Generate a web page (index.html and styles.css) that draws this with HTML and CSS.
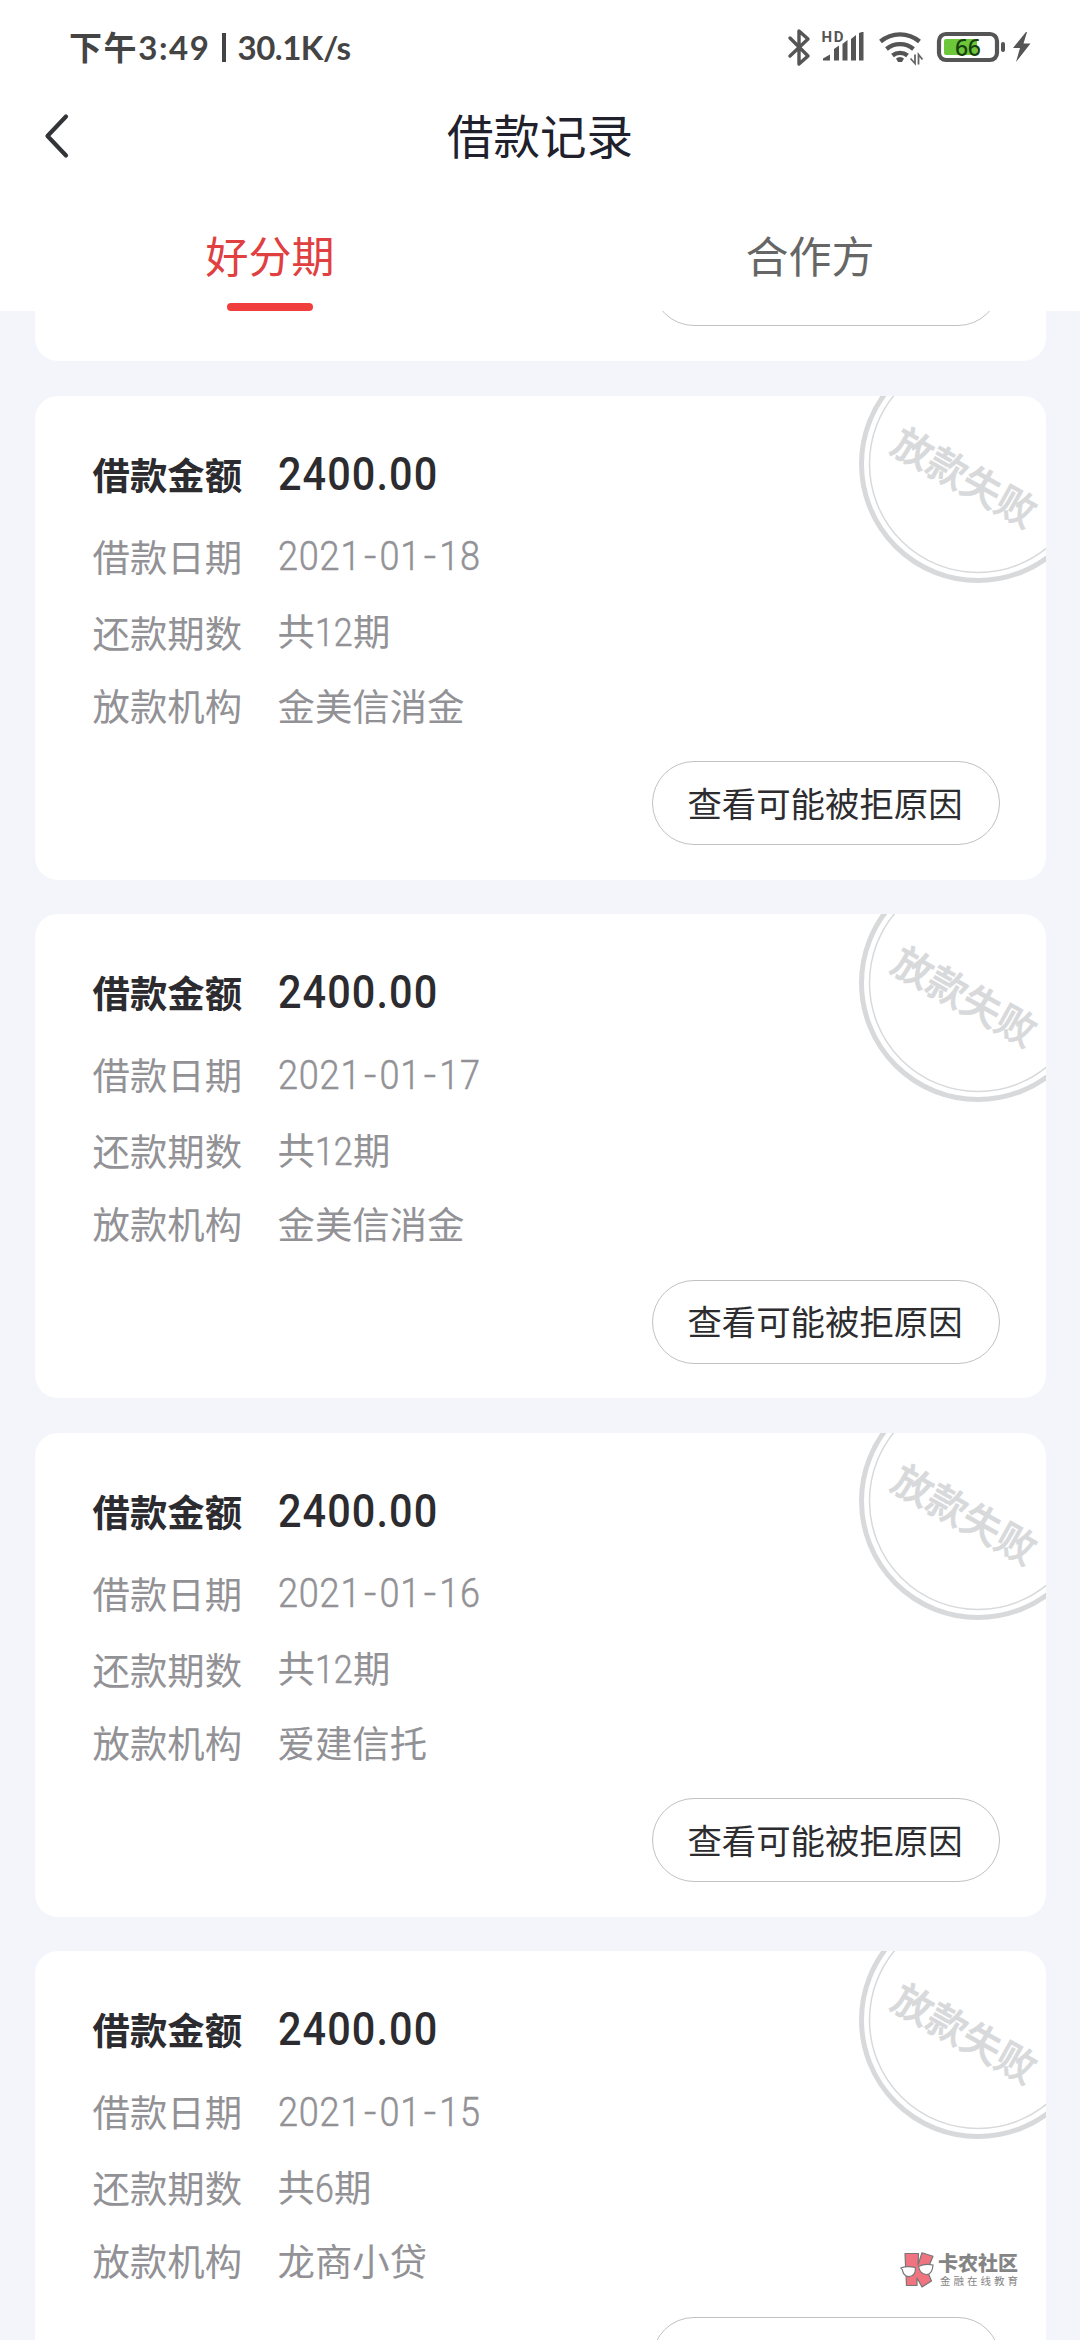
FILE: index.html
```html
<!DOCTYPE html>
<html lang="zh-CN">
<head>
<meta charset="utf-8">
<title>借款记录</title>
<link rel="stylesheet" href="styles.css">
</head>
<body>
<div class="screen">
  <header class="header">
    <div class="status">
      <div class="status-text"><span class="clock">下午3:49</span><i class="divider"></i><span class="speed">30.1K/s</span></div>
      <svg class="status-icons" width="260" height="50" viewBox="0 0 260 50">
        <path d="M10 13 28 31 19 39V6l9 8L10 31" fill="none" stroke="#555" stroke-width="3.400" stroke-linejoin="round" stroke-linecap="round"/>
        <text class="hd" x="41.500" y="16.500" textLength="22">HD</text>
        <g fill="#555">
          <path d="M43 35.500v-2l7-4v6zM54 35.500V24l5-3.500v15zM62.500 35.500V19l5-4v20.500zM71 35.500V14l5-4v25.500zM79 35.500V8l3-1h1.500v28.500z"/>
        </g>
        <path d="M101 17.500a30 30 0 0 1 39 0M107 25a21 21 0 0 1 27 0M113 31.500a12 12 0 0 1 15 0" transform="translate(-.5 -1)" fill="none" stroke="#555" stroke-width="4.300"/>
        <path d="M116 33.500a6 6 0 0 1 8 0l-2 3.500h-4z" fill="#555"/>
        <path d="M135 29.500v9l-4.500-5M138.500 39.500v-10l4 5" fill="none" stroke="#666" stroke-width="1.800"/>
        <rect x="159" y="9" width="58" height="26" rx="7" fill="none" stroke="#555" stroke-width="4.200"/>
        <rect x="164" y="14" width="33" height="16" rx="2" fill="#6cc83a"/>
        <text class="level" x="188" y="30.500" text-anchor="middle" textLength="26">66</text>
        <rect x="221" y="17" width="4" height="10" rx="2" fill="#555"/>
        <path d="M246 7 233 23h7l-4 14 14.500-18.500h-7L247 7z" fill="#555"/>
      </svg>
    </div>
    <div class="titlebar">
      <svg class="back" width="28" height="48" viewBox="0 0 28 48"><path d="M25 4.500 6.500 24 25 43.500" fill="none" stroke="#333438" stroke-width="4.200" stroke-linecap="round" stroke-linejoin="round"/></svg>
      <h1 class="title">借款记录</h1>
    </div>
    <nav class="tabs">
      <div class="tab tab-active">好分期</div>
      <div class="tab">合作方</div>
    </nav>
  </header>
  <main class="list" id="list"></main>
  <div class="watermark">
    <svg width="34" height="36" viewBox="0 0 34 36">
      <path d="M5 1.500h13.500L18 13 22 .8l11 3.400-6 14.300L31.500 29l-9.500 6-5-9v7.500H6.500z" fill="#ef7480" stroke="#777" stroke-width="1.200" stroke-linejoin="round"/>
      <g fill="#fff" stroke="#777" stroke-width="1.200">
        <path d="M.8 16c4-1.500 10-1.500 14.500-.5.500 5-1.500 9-6.300 9.200S3 21.500 2.300 17.700z"/>
        <path d="M18.500 14.500c4-2 10-2.500 14.500-1.500-.3 5-2 9-6 9.500-4.500 0-7.500-3-8.500-8z"/>
      </g>
    </svg>
    <div class="brand"><strong>卡农社区</strong><small>金融在线教育</small></div>
  </div>
</div>
<script src="main.js"></script>
</body>
</html>
```
FILE: styles.css
```css
* { box-sizing: border-box; }
body {
  margin: 0;
  background: #f3f5fa;
  font-family: "Noto Sans CJK SC", sans-serif;
}
.screen {
  position: relative;
  width: 1080px;
  height: 2340px;
  overflow: hidden;
  background: #f3f5fa;
  display: flex;
  flex-direction: column;
}
.header {
  flex: none;
  height: 311px;
  background: #fff;
  display: flex;
  flex-direction: column;
}
.status {
  height: 94px;
  padding: 0 40px 0 69px;
  display: flex;
  justify-content: space-between;
  align-items: center;
}
.status-text {
  display: flex;
  align-items: center;
  color: #444;
  font-family: Lato, "Noto Sans CJK SC", sans-serif;
  font-weight: 700;
  font-size: 33px;
  line-height: 40px;
  white-space: nowrap;
}
.clock { letter-spacing: 1.600px; }
.speed { letter-spacing: -0.500px; }
.divider { width: 4px; height: 29px; margin: 0 12px 0 11px; background: #444; }
.status-icons { flex: none; margin-top: 5px; }
.hd { font: 700 15px Roboto, sans-serif; fill: #555; }
.level { font: 500 23px "Noto Sans", sans-serif; fill: #173f0c; }
.titlebar {
  height: 84px;
  padding: 0 41px;
  display: grid;
  grid-template-columns: 28px 1fr 28px;
  align-items: center;
}
.title {
  margin: -4px 0 0;
  text-align: center;
  font-size: 46.500px;
  line-height: 60px;
  font-weight: 400;
  color: #20212c;
}
.tabs { flex: 1; display: grid; grid-template-columns: 1fr 1fr; }
.tab {
  display: flex;
  flex-direction: column;
  align-items: center;
  justify-content: space-between;
  padding-top: 46px;
  font-size: 43px;
  line-height: 60px;
  color: #666;
}
.tab-active { color: #e0403f; }
.tab-active::after {
  content: "";
  width: 86px;
  height: 8px;
  border-radius: 4px;
  background: #f03e3d;
}
.list {
  flex: none;
  padding: 0 34px 0 35px;
  display: flex;
  flex-direction: column;
  gap: 34.500px;
}
.card {
  position: relative;
  flex: none;
  height: 484px;
  padding: 50px 46px 0 57.500px;
  border-radius: 23px;
  overflow: hidden;
  background: #fff;
  display: flex;
  flex-direction: column;
}
.card-tail {
  height: 50px;
  padding: 0 46px 35px;
  border-radius: 0 0 23px 23px;
  justify-content: flex-end;
}
.row {
  display: flex;
  align-items: center;
  height: 74px;
  font-size: 37.400px;
  line-height: 56px;
  color: #929296;
}
.row-amount { height: 56px; margin-bottom: 26px; color: #2c2c30; font-weight: 700; }
.row-date { height: 56px; margin-bottom: 11px; }
.row-org { height: 72px; }
.label { width: 185px; flex: none; }
.amount, .date, .num {
  display: inline-block;
  transform-origin: left center;
  white-space: nowrap;
}
.amount { font: 500 46px/56px Roboto, sans-serif; letter-spacing: 1.200px; transform: scaleX(0.9); }
.date {
  padding-top: 1px;
  font: 300 41px/56px Roboto, sans-serif;
  letter-spacing: 0.900px;
  transform: scaleX(0.88);
  -webkit-text-stroke: 0.500px #929296;
}
.date i { display: inline-block; margin: 0 4px; font-style: normal; transform: scaleX(1.200); }
.num { font: 300 39.500px/56px Roboto, sans-serif; transform: scaleX(0.86); -webkit-text-stroke: 0.500px #929296; }
.reason {
  flex: none;
  align-self: flex-end;
  width: 348px;
  height: 84px;
  margin-top: 20.500px;
  padding: 0 2px 3px 0;
  border: 1.500px solid #c0c2c2;
  border-radius: 42px;
  background: #fff;
  color: #2d2d30;
  font: 400 34.400px/50px "Noto Sans CJK SC", sans-serif;
}
.stamp { position: absolute; top: -51.500px; right: -52px; }
.stamp text { font: 500 39.500px "Noto Sans CJK SC", sans-serif; fill: #d8d9db; stroke: #d8d9db; stroke-width: 0.700px; }
.watermark {
  position: absolute;
  left: 900px;
  top: 2252px;
  display: flex;
  gap: 4px;
}
.brand { display: flex; flex-direction: column; color: #858585; }
.brand strong { font-size: 20px; line-height: 22px; font-weight: 900; }
.brand small { font-size: 10.500px; line-height: 14px; letter-spacing: 3px; margin-left: 2px; white-space: nowrap; }
```
FILE: main.js
```
const records = [
  { date: "2021-01-18", terms: 12, org: "金美信消金" },
  { date: "2021-01-17", terms: 12, org: "金美信消金" },
  { date: "2021-01-16", terms: 12, org: "爱建信托" },
  { date: "2021-01-15", terms: 6, org: "龙商小贷" }
];

// Digits are set condensed, so each one takes 19px of the line.
const termWidth = n => String(n).length * 19;

// The list is scrolled: only the foot of the newest card is in view.
const tail = `<section class="card card-tail"><button class="reason" aria-label="查看可能被拒原因"></button></section>`;

document.getElementById("list").innerHTML = tail + records.map((r, i) => `
  <section class="card">
    <div class="row row-amount"><span class="label">借款金额</span><span class="amount">2400.00</span></div>
    <div class="row row-date"><span class="label">借款日期</span><span class="date">${r.date.replace(/-/g, "<i>-</i>")}</span></div>
    <div class="row"><span class="label">还款期数</span><span>共<span class="num" style="width:${termWidth(r.terms)}px">${r.terms}</span>期</span></div>
    <div class="row row-org"><span class="label">放款机构</span><span>${r.org}</span></div>
    <button class="reason" ${i === records.length - 1 ? 'aria-label="查看可能被拒原因">' : ">查看可能被拒原因"}</button>
    <svg class="stamp" width="240" height="240" viewBox="0 0 240 240">
      <circle cx="120" cy="120" r="116.500" fill="none" stroke="#d8d9db" stroke-width="5"/>
      <circle cx="120" cy="120" r="108.500" fill="none" stroke="#d8d9db" stroke-width="1.500"/>
      <text transform="translate(106.500 134) rotate(29.300)" x="0" y="14" text-anchor="middle">放款失败</text>
    </svg>
  </section>`).join("");
```
